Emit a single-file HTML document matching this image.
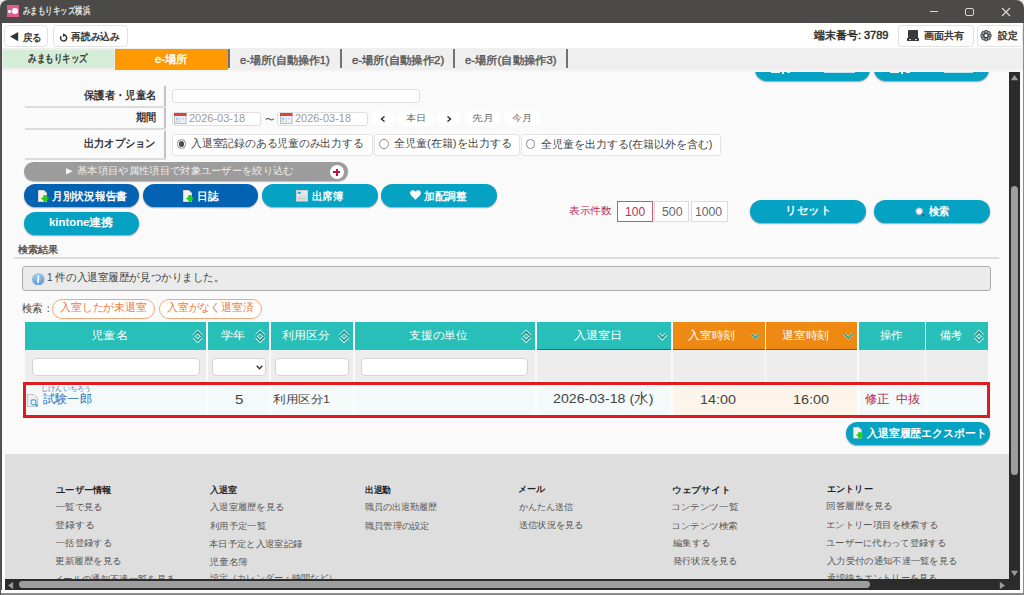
<!DOCTYPE html>
<html lang="ja"><head><meta charset="utf-8">
<style>
*{box-sizing:border-box;margin:0;padding:0}
html,body{width:1024px;height:595px;overflow:hidden;background:#fafafa}
body{position:relative;font-family:"Liberation Sans",sans-serif;color:#333}
.a{position:absolute}
.t{position:absolute;white-space:nowrap;line-height:1;transform-origin:0 0}
.tb{position:absolute;top:25px;height:22px;border:1px solid #e2e2e2;border-radius:4px;background:#fff}
.sep{position:absolute;top:49.4px;width:1.6px;height:19px;background:#727272}
.lr{position:absolute;left:25px;width:141px;height:2px;background:#dcdcdc}
.dv{position:absolute;left:164px;width:2px;background:#c2c2c2}
.inp{position:absolute;background:#fff;border:1px solid #dedede;border-radius:3px}
.pl{position:absolute;top:111px;height:15px;background:#fff;border-radius:8px}
.opt{position:absolute;top:133.5px;height:22.5px;background:#fff;border:1px solid #e3e3e3;border-radius:3px}
.rad{position:absolute;width:9.7px;height:9.7px;border:1.4px solid #8a8a8a;border-radius:50%;background:#fff}
.btn{position:absolute;border-radius:12px;box-shadow:0 1px 1.5px rgba(0,0,0,.35)}
.dk{background:#0462b2}
.tl{background:#05a2c4}
.th{position:absolute;top:322px;height:28px;background:#27bfb7}
.or{background:#ee8a13}
.ul{position:absolute;top:349px;height:2px;background:#e6201c}
.fr{position:absolute;top:350px;height:31px;background:#ededed}
.nb{position:absolute;top:201px;height:21px;background:#fff;border:1px solid #dcdcdc}
</style></head><body>
<!-- window corners -->
<div class="a" style="left:0;top:0;width:1024px;height:12px;background:#e8e8e8"></div>
<div class="a" style="left:0;top:0;width:1024px;height:23px;background:#4b4a48;border-radius:8px 8px 0 0"></div>
<!-- app icon -->
<div class="a" style="left:7px;top:5px;width:12px;height:12px;background:#e05a8c"></div>
<div class="a" style="left:11.9px;top:8.3px;width:5.8px;height:5.8px;background:#fff;border-radius:50%"></div>
<div class="a" style="left:8.1px;top:10px;width:2.5px;height:2.5px;background:#fff;border-radius:50%"></div>
<div class="a" style="left:10px;top:10.7px;width:2.5px;height:1px;background:#fff;opacity:.6"></div>
<!-- window controls -->
<div class="a" style="left:930px;top:11px;width:8px;height:1px;background:#d8d8d8"></div>
<div class="a" style="left:965px;top:7.5px;width:8.5px;height:8.5px;border:1.2px solid #d8d8d8;border-radius:2px"></div>
<svg class="a" style="left:1001px;top:7px" width="10" height="10" viewBox="0 0 10 10"><path d="M1 1L9 9M9 1L1 9" stroke="#dcdcdc" stroke-width="1.1"/></svg>
<!-- frame -->
<div class="a" style="left:0;top:23px;width:2px;height:572px;background:#4b4a48"></div>
<div class="a" style="left:2px;top:23px;width:1021px;height:25px;background:#fff"></div>
<div class="a" style="left:1023px;top:23px;width:1px;height:572px;background:#8c8c8c"></div>
<!-- toolbar -->
<div class="tb" style="left:4px;width:44px"></div>
<svg class="a" style="left:10px;top:32px" width="9" height="10" viewBox="0 0 9 10"><path d="M0 4.6L8.2 0V9.2Z" fill="#333"/></svg>
<div class="tb" style="left:52.5px;width:75px"></div>
<svg class="a" style="left:59px;top:33px" width="9" height="9" viewBox="0 0 9 9"><path d="M2.2 3.2A3 3 0 1 0 5 2" fill="none" stroke="#333" stroke-width="1.5"/><path d="M4 0.3L6.6 2.1L4 3.9Z" fill="#333"/></svg>
<div class="tb" style="left:897.5px;width:76px"></div>
<div class="a" style="left:908px;top:30px;width:10px;height:8.5px;background:#3a3a3a;border-radius:1px"></div>
<div class="a" style="left:907px;top:38px;width:12px;height:2.8px;background:#3a3a3a"></div>
<div class="a" style="left:909px;top:38.7px;width:2px;height:1.2px;background:#ccc"></div>
<div class="a" style="left:915px;top:38.7px;width:2px;height:1.2px;background:#ccc"></div>
<div class="tb" style="left:976.5px;width:46px"></div>
<svg class="a" style="left:980.4px;top:29.6px" width="12" height="12" viewBox="0 0 12 12"><g fill="#9aa4ad" stroke="#3a3a3a" stroke-width="0.9"><circle cx="9.60" cy="5.60" r="1.75"/><circle cx="8.55" cy="8.15" r="1.75"/><circle cx="6.00" cy="9.20" r="1.75"/><circle cx="3.45" cy="8.15" r="1.75"/><circle cx="2.40" cy="5.60" r="1.75"/><circle cx="3.45" cy="3.05" r="1.75"/><circle cx="6.00" cy="2.00" r="1.75"/><circle cx="8.55" cy="3.05" r="1.75"/></g><circle cx="6" cy="5.6" r="2.6" fill="#3a3a3a"/><circle cx="6" cy="5.6" r="1.5" fill="#fff"/></svg>
<!-- content cut-off buttons -->
<div class="btn tl" style="left:755px;top:57px;width:115px;height:23.5px"></div>
<div class="btn tl" style="left:874px;top:57px;width:115px;height:23.5px"></div>
<!-- tabs -->
<div class="a" style="left:2px;top:48px;width:1021px;height:21.6px;background:#efefef"></div>
<div class="a" style="left:2px;top:69.6px;width:1021px;height:2px;background:#f6f6f6"></div>
<div class="a" style="left:3px;top:49.5px;width:110.8px;height:18.5px;background:#d5ecd6"></div>
<div class="a" style="left:114.5px;top:48.7px;width:113.9px;height:21.1px;background:#fe9900"></div>
<div class="sep" style="left:228.4px"></div>
<div class="sep" style="left:340px"></div>
<div class="sep" style="left:453.2px"></div>
<div class="sep" style="left:566.2px"></div>
<!-- fragments of clipped button text -->
<div class="a" style="left:771px;top:71.6px;width:9px;height:1.6px;background:#e8f6fa"></div>
<div class="a" style="left:782px;top:71.6px;width:2px;height:2.5px;background:#e8f6fa"></div>
<div class="a" style="left:787px;top:71.6px;width:3px;height:1.6px;background:#e8f6fa"></div>
<div class="a" style="left:824px;top:71.6px;width:31px;height:1.6px;background:#e8f6fa;opacity:.8"></div>
<div class="a" style="left:890px;top:71.6px;width:9px;height:1.6px;background:#e8f6fa"></div>
<div class="a" style="left:901px;top:71.6px;width:2px;height:2.5px;background:#e8f6fa"></div>
<div class="a" style="left:906px;top:71.6px;width:4px;height:1.6px;background:#e8f6fa"></div>
<div class="a" style="left:944px;top:71.6px;width:29px;height:1.6px;background:#e8f6fa;opacity:.8"></div>
<!-- form -->
<div class="dv" style="top:86px;height:20px"></div>
<div class="lr" style="top:105.7px"></div>
<div class="dv" style="top:108px;height:20px"></div>
<div class="lr" style="top:128px"></div>
<div class="dv" style="top:130.5px;height:27px"></div>
<div class="lr" style="top:157.5px"></div>
<div class="inp" style="left:171.6px;top:89.4px;width:248px;height:14px"></div>
<div class="inp" style="left:172.2px;top:111.6px;width:89.2px;height:14.3px"></div>
<div class="inp" style="left:277.4px;top:111.6px;width:90.2px;height:14.3px"></div>
<svg class="a" style="left:174.2px;top:113.2px" width="12.5" height="11" viewBox="0 0 12.5 11"><rect x="0.5" y="0.5" width="11.5" height="10" fill="#eef2f6" stroke="#b9b9b9"/><rect x="0" y="0" width="12.5" height="3" fill="#e0403a"/><rect x="2" y="5" width="2" height="1.5" fill="#7fb3de"/><rect x="5" y="5" width="2" height="1.5" fill="#c8d6e4"/><rect x="8" y="5" width="2" height="1.5" fill="#c8d6e4"/><rect x="2" y="7.5" width="2" height="1.5" fill="#c8d6e4"/><rect x="5" y="7.5" width="2" height="1.5" fill="#c8d6e4"/></svg>
<svg class="a" style="left:280.3px;top:113.2px" width="12.5" height="11" viewBox="0 0 12.5 11"><rect x="0.5" y="0.5" width="11.5" height="10" fill="#eef2f6" stroke="#b9b9b9"/><rect x="0" y="0" width="12.5" height="3" fill="#e0403a"/><rect x="2" y="5" width="2" height="1.5" fill="#7fb3de"/><rect x="5" y="5" width="2" height="1.5" fill="#c8d6e4"/><rect x="8" y="5" width="2" height="1.5" fill="#c8d6e4"/><rect x="2" y="7.5" width="2" height="1.5" fill="#c8d6e4"/><rect x="5" y="7.5" width="2" height="1.5" fill="#c8d6e4"/></svg>
<div class="pl" style="left:371px;width:23px"></div>
<svg class="a" style="left:380px;top:115.5px" width="6" height="6" viewBox="0 0 6 6"><path d="M4.5 0.5L1.5 3L4.5 5.5" fill="none" stroke="#333" stroke-width="1.5"/></svg>
<div class="pl" style="left:397px;width:37px"></div>
<div class="pl" style="left:437px;width:23px"></div>
<svg class="a" style="left:446px;top:115.5px" width="6" height="6" viewBox="0 0 6 6"><path d="M1.5 0.5L4.5 3L1.5 5.5" fill="none" stroke="#333" stroke-width="1.5"/></svg>
<div class="pl" style="left:463.5px;width:36.5px"></div>
<div class="pl" style="left:503.5px;width:37px"></div>
<div class="opt" style="left:172.2px;width:201px"></div>
<div class="rad" style="left:176.5px;top:139.2px"></div>
<div class="a" style="left:178.5px;top:141.2px;width:5.7px;height:5.7px;border-radius:50%;background:#4a4a4a"></div>
<div class="opt" style="left:373.6px;width:146px"></div>
<div class="rad" style="left:379px;top:139.2px"></div>
<div class="opt" style="left:520.9px;width:200px"></div>
<div class="rad" style="left:525.5px;top:139px"></div>
<!-- filter bar -->
<div class="a" style="left:23.5px;top:162.2px;width:324.5px;height:18.5px;background:#9c9c9c;border-radius:9.5px;box-shadow:0 1px 1px rgba(0,0,0,.25)"></div>
<svg class="a" style="left:66px;top:168px" width="7" height="7" viewBox="0 0 7 7"><path d="M0 0L6.8 3.3L0 6.6Z" fill="#f4f4f4"/></svg>
<div class="a" style="left:329.8px;top:165.2px;width:14px;height:14px;background:#fff;border-radius:50%"></div>
<div class="a" style="left:333.2px;top:171.3px;width:7.2px;height:1.8px;background:#c0104a"></div>
<div class="a" style="left:335.9px;top:168.6px;width:1.8px;height:7.2px;background:#c0104a"></div>
<!-- buttons -->
<div class="btn dk" style="left:23.5px;top:184.2px;width:115.5px;height:22.8px"></div>
<div class="btn dk" style="left:143px;top:184.2px;width:115px;height:22.8px"></div>
<div class="btn tl" style="left:262px;top:184.2px;width:115.5px;height:22.8px"></div>
<div class="btn tl" style="left:381px;top:184.2px;width:115.5px;height:22.8px"></div>
<div class="btn tl" style="left:23.5px;top:211.5px;width:115.5px;height:23px"></div>
<svg class="a" style="left:37.5px;top:189.8px" width="11" height="13" viewBox="0 0 11 13"><path d="M0.5 0.5H6L8.5 3V11.5H0.5Z" fill="#f4f1ec" stroke="#d8d4cc"/><path d="M5.6 5.6H8.4V8H10.6L7 12.2L3.4 8H5.6Z" fill="#27cc1a" stroke="#27cc1a" stroke-width="0.8" stroke-linejoin="round"/></svg>
<svg class="a" style="left:183px;top:189.8px" width="11" height="13" viewBox="0 0 11 13"><path d="M0.5 0.5H6L8.5 3V11.5H0.5Z" fill="#f4f1ec" stroke="#d8d4cc"/><path d="M5.6 5.6H8.4V8H10.6L7 12.2L3.4 8H5.6Z" fill="#27cc1a" stroke="#27cc1a" stroke-width="0.8" stroke-linejoin="round"/></svg>
<svg class="a" style="left:296.3px;top:190.2px" width="12" height="11.5" viewBox="0 0 12 11.5"><rect x="0.4" y="0.4" width="11.2" height="10.7" fill="#ececec" stroke="#d9cfcb" stroke-width="0.8"/><path d="M1.6 1.8H4.6L5.4 3.2L3.4 4.2L1.6 3.4Z" fill="#2fa8ec"/><rect x="6" y="2.6" width="4.4" height="0.8" fill="#cfcfcf"/><rect x="3" y="5.3" width="7.4" height="0.8" fill="#cfcfcf"/><rect x="1.8" y="6.3" width="0.8" height="3.6" fill="#c4c4c4"/><rect x="3" y="7.5" width="7.4" height="1.2" fill="#bdbdbd"/><rect x="1.8" y="9.4" width="8.6" height="0.7" fill="#cfcfcf"/></svg>
<svg class="a" style="left:410.4px;top:190.4px" width="11" height="10" viewBox="0 0 11 10"><path d="M5.5 9.8L1 5.2C-0.5 3.6 0 0.6 2.6 0.3C4 0.1 5 1 5.5 1.8C6 1 7 0.1 8.4 0.3C11 0.6 11.5 3.6 10 5.2Z" fill="#fff"/></svg>
<!-- count -->
<div class="nb" style="left:617px;width:35.8px;border-color:#cc5577"></div>
<div class="nb" style="left:654.3px;width:35.2px"></div>
<div class="nb" style="left:691.3px;width:36.3px"></div>
<div class="btn tl" style="left:750.2px;top:199.6px;width:116px;height:23.4px"></div>
<div class="btn tl" style="left:873.8px;top:199.6px;width:115.8px;height:23.4px"></div>
<svg class="a" style="left:914.5px;top:206.5px" width="10" height="10" viewBox="0 0 10 10"><circle cx="4.3" cy="4.3" r="3.6" fill="#dfe9f2" stroke="#8aa8c4" stroke-width="0.8"/><circle cx="4.3" cy="4.3" r="2" fill="#fff"/><path d="M6.8 6.8L9.3 9.3" stroke="#1e5f8c" stroke-width="1.6"/></svg>
<!-- results -->
<div class="a" style="left:14.2px;top:257.2px;width:985px;height:1.9px;background:#dcdcdc"></div>
<div class="a" style="left:21.7px;top:266.1px;width:969.5px;height:25.3px;background:#ebebeb;border:1.3px solid #adadad;border-radius:3px"></div>
<svg class="a" style="left:32.3px;top:272.8px" width="12.6" height="12.6" viewBox="0 0 12.6 12.6"><defs><radialGradient id="ig" cx="0.45" cy="0.3" r="0.75"><stop offset="0" stop-color="#a8d4f2"/><stop offset="1" stop-color="#3f88cc"/></radialGradient></defs><circle cx="6.3" cy="6.3" r="6.1" fill="url(#ig)"/><circle cx="6.3" cy="6.3" r="4.9" fill="none" stroke="#d8ecfa" stroke-opacity=".45" stroke-width=".7"/><path d="M6.6 3.4V3.7M6.4 5.4L6 9.4" stroke="#fff" stroke-width="1.6" stroke-linecap="round"/></svg>
<div class="a" style="left:52.2px;top:299.4px;width:103.1px;height:19.5px;border:1px solid #f7a778;border-radius:10px;background:#fff"></div>
<div class="a" style="left:158.6px;top:299px;width:103.1px;height:20px;border:1px solid #f7a778;border-radius:10px;background:#fff"></div>
<!-- table header -->
<div class="th" style="left:25px;width:181px"></div>
<div class="th" style="left:207.8px;width:61px"></div>
<div class="th" style="left:270.9px;width:82px"></div>
<div class="th" style="left:354.5px;width:180.5px"></div>
<div class="th" style="left:536.5px;width:134.5px"></div>
<div class="th or" style="left:672.6px;width:92px"></div>
<div class="th or" style="left:765.8px;width:91.4px"></div>
<div class="th" style="left:858.6px;width:66px"></div>
<div class="th" style="left:926.4px;width:61.6px"></div>
<div class="ul" style="left:536.5px;width:134.5px"></div>
<div class="ul" style="left:672.6px;width:92px"></div>
<div class="ul" style="left:765.8px;width:91.4px"></div>
<svg class="a" style="left:0;top:0" width="1024" height="595" viewBox="0 0 1024 595">
<g fill="none" stroke-linejoin="miter">
<g id="srt"><path d="M193.9 335.6L197.7 331.8L201.5 335.6M193.9 337L197.7 340.8L201.5 337" stroke="#e6f7f6" stroke-width="3.4"/><path d="M193.9 335.6L197.7 331.8L201.5 335.6M193.9 337L197.7 340.8L201.5 337" stroke="#17958d" stroke-width="1.7"/></g>
<g transform="translate(62.5 0)"><path d="M193.9 335.6L197.7 331.8L201.5 335.6M193.9 337L197.7 340.8L201.5 337" stroke="#e6f7f6" stroke-width="3.4"/><path d="M193.9 335.6L197.7 331.8L201.5 335.6M193.9 337L197.7 340.8L201.5 337" stroke="#17958d" stroke-width="1.7"/></g>
<g transform="translate(146.4 0)"><path d="M193.9 335.6L197.7 331.8L201.5 335.6M193.9 337L197.7 340.8L201.5 337" stroke="#e6f7f6" stroke-width="3.4"/><path d="M193.9 335.6L197.7 331.8L201.5 335.6M193.9 337L197.7 340.8L201.5 337" stroke="#17958d" stroke-width="1.7"/></g>
<g transform="translate(328.4 0)"><path d="M193.9 335.6L197.7 331.8L201.5 335.6M193.9 337L197.7 340.8L201.5 337" stroke="#e6f7f6" stroke-width="3.4"/><path d="M193.9 335.6L197.7 331.8L201.5 335.6M193.9 337L197.7 340.8L201.5 337" stroke="#17958d" stroke-width="1.7"/></g>
<g transform="translate(781.4 0)"><path d="M193.9 335.6L197.7 331.8L201.5 335.6M193.9 337L197.7 340.8L201.5 337" stroke="#e6f7f6" stroke-width="3.4"/><path d="M193.9 335.6L197.7 331.8L201.5 335.6M193.9 337L197.7 340.8L201.5 337" stroke="#17958d" stroke-width="1.7"/></g>
<path d="M658.4 334.2L662.3 338.2L666.2 334.2" stroke="#e6f7f6" stroke-width="3.4"/><path d="M658.4 334.2L662.3 338.2L666.2 334.2" stroke="#17958d" stroke-width="1.7"/>
<path d="M751.6 334L755.5 338L759.4 334" stroke="#f8d9b0" stroke-width="2.6"/><path d="M751.6 334L755.5 338L759.4 334" stroke="#169c94" stroke-width="1.6"/>
<path d="M844.6 334L848.5 338L852.4 334" stroke="#f8d9b0" stroke-width="2.6"/><path d="M844.6 334L848.5 338L852.4 334" stroke="#169c94" stroke-width="1.6"/>
</g></svg>
<!-- filter row -->
<div class="fr" style="left:25px;width:181px"></div>
<div class="fr" style="left:207.8px;width:61px"></div>
<div class="fr" style="left:270.9px;width:82px"></div>
<div class="fr" style="left:354.5px;width:180.5px"></div>
<div class="fr" style="left:536.5px;width:134.5px"></div>
<div class="fr" style="left:672.6px;width:92px"></div>
<div class="fr" style="left:765.8px;width:91.4px"></div>
<div class="fr" style="left:858.6px;width:66px"></div>
<div class="fr" style="left:926.4px;width:61.6px"></div>
<div class="inp" style="left:32.2px;top:358.1px;width:167.6px;height:18.3px;border-color:#d4d4d4;border-radius:4px"></div>
<div class="inp" style="left:211.7px;top:358.1px;width:54.1px;height:18.3px;border-color:#d4d4d4;border-radius:4px"></div>
<svg class="a" style="left:255.5px;top:365px" width="7" height="5" viewBox="0 0 7 5"><path d="M0.7 0.8L3.5 3.8L6.3 0.8" fill="none" stroke="#333" stroke-width="1.4"/></svg>
<div class="inp" style="left:275px;top:358.3px;width:73.9px;height:17.7px;border-color:#d4d4d4;border-radius:4px"></div>
<div class="inp" style="left:360.6px;top:358.3px;width:167.4px;height:17.7px;border-color:#d4d4d4;border-radius:4px"></div>
<!-- data row -->
<div class="a" style="left:22.7px;top:381.5px;width:967px;height:36.6px;border:3.2px solid #e01a1e;background:#f4f9fa"></div>
<div class="a" style="left:672.6px;top:384.7px;width:184.6px;height:30px;background:#fdf5ea"></div>
<div class="a" style="left:206.2px;top:384.7px;width:1.6px;height:30px;background:#fcfdfd"></div><div class="a" style="left:269.2px;top:384.7px;width:1.6px;height:30px;background:#fcfdfd"></div><div class="a" style="left:353px;top:384.7px;width:1.6px;height:30px;background:#fcfdfd"></div><div class="a" style="left:535px;top:384.7px;width:1.6px;height:30px;background:#fcfdfd"></div><div class="a" style="left:671px;top:384.7px;width:1.6px;height:30px;background:#fcfdfd"></div><div class="a" style="left:857.2px;top:384.7px;width:1.6px;height:30px;background:#fcfdfd"></div><div class="a" style="left:925px;top:384.7px;width:1.6px;height:30px;background:#fcfdfd"></div>
<svg class="a" style="left:27.4px;top:393.8px" width="12" height="13" viewBox="0 0 12 13"><path d="M0.5 0.5H7L10.5 4V12.5H0.5Z" fill="#efefef" stroke="#c4c4c4"/><circle cx="6.5" cy="8.3" r="2.6" fill="none" stroke="#5fb0d8" stroke-width="1.2"/><path d="M8.3 10.1L10.5 12.3" stroke="#3c8fc0" stroke-width="1.4"/></svg>
<div class="btn tl" style="left:845.9px;top:421.6px;width:143.8px;height:23.1px"></div>
<svg class="a" style="left:852.5px;top:427.3px" width="11" height="12.5" viewBox="0 0 11 13"><path d="M0.5 0.5H6L8.5 3V11.5H0.5Z" fill="#f4f1ec" stroke="#d8d4cc"/><path d="M5.6 5.6H8.4V8H10.6L7 12.2L3.4 8H5.6Z" fill="#27cc1a" stroke="#27cc1a" stroke-width="0.8" stroke-linejoin="round"/></svg>
<!-- footer -->
<div class="a" style="left:2px;top:453.5px;width:3px;height:141px;background:#fdfdfd"></div>
<div class="a" style="left:5px;top:453.5px;width:1004.2px;height:126px;background:#dedede"></div>
<div class="t" id="title" style="left:22.50px;top:6.13px;font-size:9.5px;transform:scaleX(0.7496);color:#f2f2f2;-webkit-text-stroke:0.2px #f2f2f2">みまもりキッズ横浜</div>
<div class="t" id="back" style="left:22.50px;top:32.70px;font-size:10px;transform:scaleX(0.9410);color:#333;-webkit-text-stroke:0.4px #333">戻る</div>
<div class="t" id="reload" style="left:70.80px;top:32.30px;font-size:10px;transform:scaleX(0.9762);color:#333;-webkit-text-stroke:0.4px #333">再読み込み</div>
<div class="t" id="term" style="left:814.40px;top:30.04px;font-size:11px;transform:scaleX(0.9974);color:#2a2a2a;-webkit-text-stroke:0.45px #2a2a2a">端末番号: 3789</div>
<div class="t" id="share" style="left:923.80px;top:31.40px;font-size:10px;transform:scaleX(1.0151);color:#333;-webkit-text-stroke:0.4px #333">画面共有</div>
<div class="t" id="settings" style="left:997.60px;top:31.40px;font-size:10px;transform:scaleX(0.9715);color:#333;-webkit-text-stroke:0.4px #333">設定</div>
<div class="t" id="tab1" style="left:27.50px;top:52.72px;font-size:10.5px;transform:scaleX(0.7768);color:#333;-webkit-text-stroke:0.4px #333">みまもりキッズ</div>
<div class="t" id="tab2" style="left:154.50px;top:54.29px;font-size:11px;transform:scaleX(1.0296);color:#fff;-webkit-text-stroke:0.4px #fff">e-場所</div>
<div class="t" id="tab3" style="left:239.50px;top:54.79px;font-size:11px;transform:scaleX(1.0037);color:#585858;-webkit-text-stroke:0.4px #585858">e-場所(自動操作1)</div>
<div class="t" id="tab4" style="left:351.50px;top:54.79px;font-size:11px;transform:scaleX(1.0337);color:#585858;-webkit-text-stroke:0.4px #585858">e-場所(自動操作2)</div>
<div class="t" id="tab5" style="left:464.50px;top:54.79px;font-size:11px;transform:scaleX(1.0254);color:#585858;-webkit-text-stroke:0.4px #585858">e-場所(自動操作3)</div>
<div class="t" id="lbl1" style="left:84.30px;top:90.37px;font-size:10.5px;transform:scaleX(0.9421);color:#333;font-weight:bold">保護者・児童名</div>
<div class="t" id="lbl2" style="left:135.70px;top:112.07px;font-size:10.5px;transform:scaleX(0.9228);color:#333;font-weight:bold">期間</div>
<div class="t" id="lbl3" style="left:84.30px;top:138.47px;font-size:10.5px;transform:scaleX(0.9299);color:#333;font-weight:bold">出力オプション</div>
<div class="t" id="date1" style="left:189.30px;top:113.41px;font-size:11.5px;transform:scaleX(0.9552);color:#9a9a9a">2026-03-18</div>
<div class="t" id="tilde" style="left:264.50px;top:114.65px;font-size:10px;transform:scaleX(0.9572);color:#555">〜</div>
<div class="t" id="date2" style="left:295.30px;top:113.41px;font-size:11.5px;transform:scaleX(0.9518);color:#9a9a9a">2026-03-18</div>
<div class="t" id="today" style="left:405.50px;top:114.24px;font-size:8.5px;transform:scaleX(1.1250);color:#666">本日</div>
<div class="t" id="lastm" style="left:472.10px;top:114.24px;font-size:8.5px;transform:scaleX(1.2037);color:#666">先月</div>
<div class="t" id="thism" style="left:511.50px;top:114.24px;font-size:8.5px;transform:scaleX(1.1285);color:#666">今月</div>
<div class="t" id="opt1" style="left:190.50px;top:138.49px;font-size:11px;transform:scaleX(0.9810);color:#444">入退室記録のある児童のみ出力する</div>
<div class="t" id="opt2" style="left:393.90px;top:138.49px;font-size:11px;transform:scaleX(1.0035);color:#444">全児童(在籍)を出力する</div>
<div class="t" id="opt3" style="left:540.90px;top:138.59px;font-size:11px;transform:scaleX(0.9948);color:#444">全児童を出力する(在籍以外を含む)</div>
<div class="t" id="fbtext" style="left:77.10px;top:165.50px;font-size:10px;transform:scaleX(1.0321);color:#eeeeee">基本項目や属性項目で対象ユーザーを絞り込む</div>
<div class="t" id="b1" style="left:51.90px;top:190.77px;font-size:10.5px;transform:scaleX(0.9740);color:#fff;font-weight:bold">月別状況報告書</div>
<div class="t" id="b2" style="left:196.50px;top:190.77px;font-size:10.5px;transform:scaleX(0.9578);color:#fff;font-weight:bold">日誌</div>
<div class="t" id="b3" style="left:311.50px;top:191.37px;font-size:10.5px;transform:scaleX(0.9436);color:#fff;font-weight:bold">出席簿</div>
<div class="t" id="b4" style="left:424.30px;top:190.87px;font-size:10.5px;transform:scaleX(0.9682);color:#fff;font-weight:bold">加配調整</div>
<div class="t" id="b5" style="left:48.50px;top:216.57px;font-size:10.5px;transform:scaleX(1.0831);color:#fff;font-weight:bold">kintone連携</div>
<div class="t" id="cnt" style="left:569.30px;top:206.00px;font-size:10px;transform:scaleX(1.0590);color:#b8315a">表示件数</div>
<div class="t" id="n100" style="left:625.10px;top:205.78px;font-size:12px;transform:scaleX(1.0000);color:#b8315a">100</div>
<div class="t" id="n500" style="left:661.50px;top:205.78px;font-size:12px;transform:scaleX(1.0270);color:#666">500</div>
<div class="t" id="n1000" style="left:695.30px;top:205.78px;font-size:12px;transform:scaleX(1.0162);color:#666">1000</div>
<div class="t" id="reset" style="left:785.30px;top:205.47px;font-size:10.5px;transform:scaleX(1.0527);color:#fff;font-weight:bold">リセット</div>
<div class="t" id="search" style="left:929.30px;top:205.97px;font-size:10.5px;transform:scaleX(0.9242);color:#fff;font-weight:bold">検索</div>
<div class="t" id="res" style="left:18.30px;top:245.40px;font-size:10px;transform:scaleX(1.0127);color:#555;font-weight:bold">検索結果</div>
<div class="t" id="info" style="left:47.30px;top:272.37px;font-size:10.5px;transform:scaleX(0.9611);color:#444">1 件の入退室履歴が見つかりました。</div>
<div class="t" id="kensaku" style="left:22.30px;top:303.12px;font-size:10.5px;transform:scaleX(0.9468);color:#444">検索：</div>
<div class="t" id="pill1" style="left:59.90px;top:302.09px;font-size:11px;transform:scaleX(0.9875);color:#f47a38">入室したが未退室</div>
<div class="t" id="pill2" style="left:166.70px;top:302.09px;font-size:11px;transform:scaleX(0.9814);color:#f47a38">入室がなく退室済</div>
<div class="t" id="h1" style="left:91.10px;top:330.29px;font-size:11px;transform:scaleX(1.1270);color:#fff">児童名</div>
<div class="t" id="h2" style="left:220.50px;top:329.64px;font-size:11px;transform:scaleX(1.0952);color:#fff">学年</div>
<div class="t" id="h3" style="left:282.10px;top:329.59px;font-size:11px;transform:scaleX(1.0815);color:#fff">利用区分</div>
<div class="t" id="h4" style="left:409.10px;top:330.04px;font-size:11px;transform:scaleX(1.0688);color:#fff">支援の単位</div>
<div class="t" id="h5" style="left:574.30px;top:329.59px;font-size:11px;transform:scaleX(1.1049);color:#fff">入退室日</div>
<div class="t" id="h6" style="left:688.30px;top:329.59px;font-size:11px;transform:scaleX(1.0747);color:#fff">入室時刻</div>
<div class="t" id="h7" style="left:781.70px;top:329.59px;font-size:11px;transform:scaleX(1.0723);color:#fff">退室時刻</div>
<div class="t" id="h8" style="left:880.30px;top:329.59px;font-size:11px;transform:scaleX(1.0415);color:#fff">操作</div>
<div class="t" id="h9" style="left:939.50px;top:329.59px;font-size:11px;transform:scaleX(1.0021);color:#fff">備考</div>
<div class="t" id="ruby" style="left:40.70px;top:385.23px;font-size:7px;transform:scaleX(1.0336);color:#3a78c0">しけんいちろう</div>
<div class="t" id="name" style="left:42.70px;top:393.43px;font-size:12px;transform:scaleX(1.0193);color:#2b6cb6">試験一郎</div>
<div class="t" id="grade" style="left:234.70px;top:393.39px;font-size:13.5px;transform:scaleX(1.1174);color:#444">5</div>
<div class="t" id="kubun" style="left:272.90px;top:394.14px;font-size:11px;transform:scaleX(1.1389);color:#444">利用区分1</div>
<div class="t" id="date" style="left:553.10px;top:392.19px;font-size:13.5px;transform:scaleX(1.0496);color:#444">2026-03-18 (水)</div>
<div class="t" id="tin" style="left:700.10px;top:393.24px;font-size:13.5px;transform:scaleX(1.0640);color:#444">14:00</div>
<div class="t" id="tout" style="left:792.50px;top:393.24px;font-size:13.5px;transform:scaleX(1.0697);color:#444">16:00</div>
<div class="t" id="ops" style="left:864.70px;top:394.41px;font-size:11.5px;transform:scaleX(1.0248);color:#b5274f">修正&nbsp; 中抜</div>
<div class="t" id="export" style="left:867.10px;top:427.67px;font-size:10.5px;transform:scaleX(0.9879);color:#fff;font-weight:bold">入退室履歴エクスポート</div>
<div class="t" id="f00" style="left:56.10px;top:485.54px;font-size:8.5px;transform:scaleX(1.0279);color:#222;font-weight:bold">ユーザー情報</div>
<div class="t" id="f01" style="left:56.10px;top:502.96px;font-size:9px;transform:scaleX(1.0410);color:#555">一覧で見る</div>
<div class="t" id="f02" style="left:55.10px;top:521.46px;font-size:9px;transform:scaleX(1.0954);color:#555">登録する</div>
<div class="t" id="f03" style="left:56.10px;top:539.26px;font-size:9px;transform:scaleX(1.0398);color:#555">一括登録する</div>
<div class="t" id="f04" style="left:55.10px;top:556.96px;font-size:9px;transform:scaleX(1.0608);color:#555">更新履歴を見る</div>
<div class="t" id="f05" style="left:54.10px;top:574.96px;font-size:9px;transform:scaleX(1.0369);color:#555">メールの通知不達一覧を見る</div>
<div class="t" id="f10" style="left:210.30px;top:485.54px;font-size:8.5px;transform:scaleX(1.0078);color:#222;font-weight:bold">入退室</div>
<div class="t" id="f11" style="left:210.30px;top:502.96px;font-size:9px;transform:scaleX(1.0324);color:#555">入退室履歴を見る</div>
<div class="t" id="f12" style="left:210.30px;top:521.96px;font-size:9px;transform:scaleX(1.0360);color:#555">利用予定一覧</div>
<div class="t" id="f13" style="left:209.30px;top:540.26px;font-size:9px;transform:scaleX(1.0383);color:#555">本日予定と入退室記録</div>
<div class="t" id="f14" style="left:209.30px;top:557.96px;font-size:9px;transform:scaleX(1.0864);color:#555">児童名簿</div>
<div class="t" id="f15" style="left:210.30px;top:574.46px;font-size:9px;transform:scaleX(1.0117);color:#555">設定（カレンダー・時間など）</div>
<div class="t" id="f20" style="left:364.90px;top:485.54px;font-size:8.5px;transform:scaleX(0.9708);color:#222;font-weight:bold">出退勤</div>
<div class="t" id="f21" style="left:364.90px;top:502.96px;font-size:9px;transform:scaleX(1.0056);color:#555">職員の出退勤履歴</div>
<div class="t" id="f22" style="left:364.90px;top:521.96px;font-size:9px;transform:scaleX(1.0274);color:#555">職員管理の設定</div>
<div class="t" id="f30" style="left:518.10px;top:484.54px;font-size:8.5px;transform:scaleX(1.0056);color:#222;font-weight:bold">メール</div>
<div class="t" id="f31" style="left:519.10px;top:502.96px;font-size:9px;transform:scaleX(1.0056);color:#555">かんたん送信</div>
<div class="t" id="f32" style="left:519.10px;top:521.46px;font-size:9px;transform:scaleX(1.0243);color:#555">送信状況を見る</div>
<div class="t" id="f40" style="left:671.50px;top:485.54px;font-size:8.5px;transform:scaleX(1.0825);color:#222;font-weight:bold">ウェブサイト</div>
<div class="t" id="f41" style="left:670.50px;top:502.96px;font-size:9px;transform:scaleX(1.0651);color:#555">コンテンツ一覧</div>
<div class="t" id="f42" style="left:670.50px;top:521.96px;font-size:9px;transform:scaleX(1.0640);color:#555">コンテンツ検索</div>
<div class="t" id="f43" style="left:672.50px;top:539.26px;font-size:9px;transform:scaleX(1.0372);color:#555">編集する</div>
<div class="t" id="f44" style="left:672.50px;top:556.96px;font-size:9px;transform:scaleX(1.0243);color:#555">発行状況を見る</div>
<div class="t" id="f50" style="left:826.70px;top:485.04px;font-size:8.5px;transform:scaleX(1.0179);color:#222;font-weight:bold">エントリー</div>
<div class="t" id="f51" style="left:825.70px;top:502.46px;font-size:9px;transform:scaleX(1.0608);color:#555">回答履歴を見る</div>
<div class="t" id="f52" style="left:825.70px;top:521.46px;font-size:9px;transform:scaleX(1.0406);color:#555">エントリー項目を検索する</div>
<div class="t" id="f53" style="left:825.70px;top:539.26px;font-size:9px;transform:scaleX(1.0322);color:#555">ユーザーに代わって登録する</div>
<div class="t" id="f54" style="left:826.70px;top:557.46px;font-size:9px;transform:scaleX(1.0352);color:#555">入力受付の通知不達一覧を見る</div>
<div class="t" id="f55" style="left:826.70px;top:574.46px;font-size:9px;transform:scaleX(1.0215);color:#555">承認待ちエントリーを見る</div>
<!-- scrollbars -->
<div class="a" style="left:1008.7px;top:72px;width:11.3px;height:518px;background:#2b2b2b"></div>
<div class="a" style="left:1020px;top:71.6px;width:3px;height:523px;background:#fafafa"></div>
<div class="a" style="left:5px;top:579.2px;width:1015px;height:10.8px;background:#2b2b2b"></div>
<svg class="a" style="left:1010px;top:74px" width="9" height="7" viewBox="0 0 9 7"><path d="M0.8 6.2L4.5 1L8.2 6.2Z" fill="#9a9a9a"/></svg>
<svg class="a" style="left:1010px;top:570px" width="9" height="7" viewBox="0 0 9 7"><path d="M0.8 0.8L4.5 6L8.2 0.8Z" fill="#9a9a9a"/></svg>
<svg class="a" style="left:7px;top:581px" width="7" height="9" viewBox="0 0 7 9"><path d="M6.2 0.8L1 4.5L6.2 8.2Z" fill="#9a9a9a"/></svg>
<svg class="a" style="left:999px;top:581px" width="7" height="9" viewBox="0 0 7 9"><path d="M0.8 0.8L6 4.5L0.8 8.2Z" fill="#9a9a9a"/></svg>
<div class="a" style="left:1010.5px;top:186px;width:7.5px;height:289px;background:#9e9e9e;border-radius:4px"></div>
<div class="a" style="left:18.5px;top:581.3px;width:851.5px;height:6.8px;background:#9e9e9e;border-radius:3.4px"></div>
<div class="a" style="left:1.3px;top:590px;width:1021.7px;height:3px;background:#fdfdfd"></div>
<div class="a" style="left:0;top:593px;width:1024px;height:2px;background:#8c8c8c;border-radius:0 0 8px 8px"></div>
<div class="a" style="left:0;top:23px;width:1.3px;height:572px;background:#555"></div>
</body></html>
